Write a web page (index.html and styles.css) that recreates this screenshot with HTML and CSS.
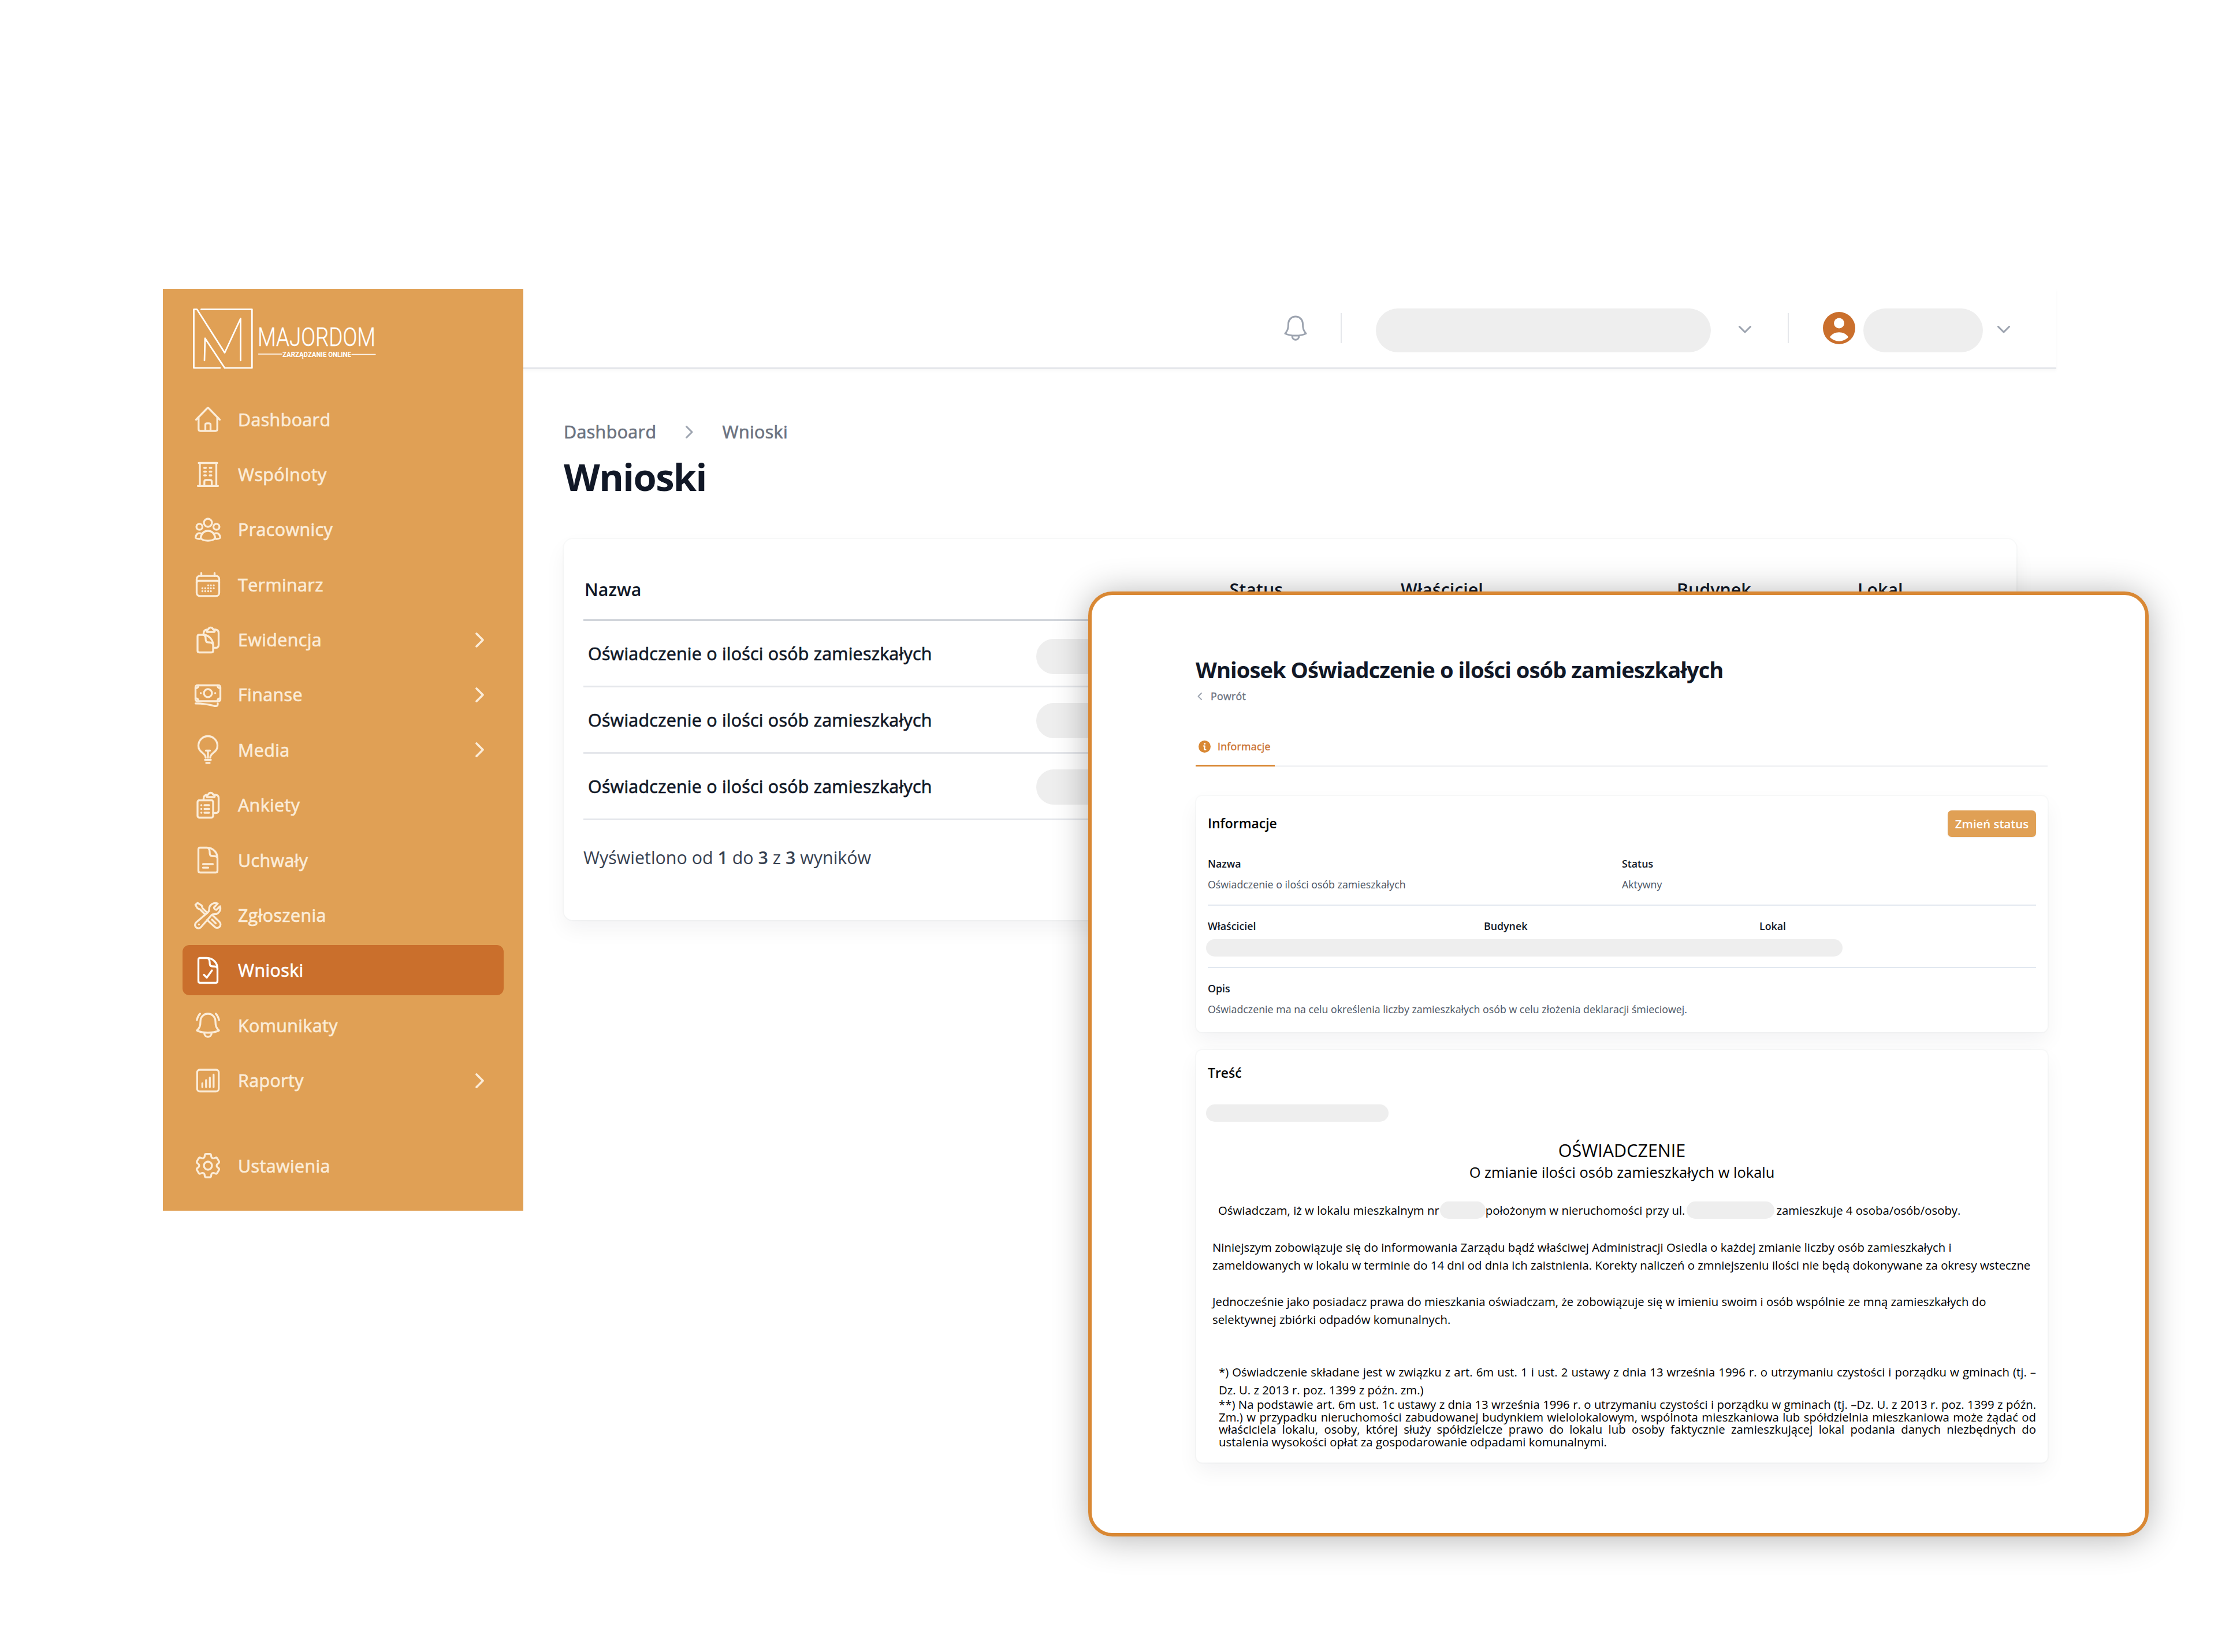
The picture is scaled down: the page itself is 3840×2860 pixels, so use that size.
FILE: index.html
```html
<!DOCTYPE html>
<html lang="pl">
<head>
  <meta charset="UTF-8">
  <title>Majordom - Wnioski</title>
  <link rel="stylesheet" href="styles.css">
</head>
<body>
  <div class="page">
    <div class="app">
      <aside class="sidebar">
        <svg class="logo" viewBox="0 0 318 106" fill="none" stroke="#fff" stroke-width="2.7" stroke-linejoin="round">
          <path d="M47 103H1.5V1.500H7L55 76.700L82.500 17.500V90"/>
          <path d="M14.300 1.500H102.300V103H55L21 51.700L20 90"/>
          <path d="M113.500 79H154M275 79.300H316" stroke-width="1.300"/>
          <text class="logo-name" x="112" y="65" textLength="204" lengthAdjust="spacingAndGlyphs">MAJORDOM</text>
          <text class="logo-sub" x="155" y="83.600" textLength="119" lengthAdjust="spacingAndGlyphs">ZARZĄDZANIE ONLINE</text>
        </svg>

        <nav class="menu">
          <a class="menu-item">
            <svg class="icon" viewBox="0 0 48 48"><path d="M3.500 24.500L22.500 5q1.500-1.500 3 0L44.500 24.500M7.800 21V41q0 3 3 3H37.200q3 0 3-3V21M19.500 44V33.500q0-2.700 2.700-2.700h3.600q2.700 0 2.700 2.700V44"/></svg>
            Dashboard
          </a>
          <a class="menu-item">
            <svg class="icon" viewBox="0 0 48 48"><path d="M8 4.500H40M10 4.500V44M38.500 4.500V44M6.500 44.300H41.500M17.800 44V37q0-3 3-3h6.800q3 0 3 3v7M17.500 13h3M27 13h3M17.500 19.500h3M27 19.500h3M17.500 26h3M27 26h3"/></svg>
            Wspólnoty
          </a>
          <a class="menu-item">
            <svg class="icon" viewBox="0 0 48 48"><circle cx="24" cy="12" r="7"/><circle cx="9.300" cy="19" r="5.200"/><circle cx="38.700" cy="19" r="5.200"/><path d="M11.500 39C12 31 17 26 24 26s12 5 12.500 13c-5 5.500-20 5.500-25 0zM13.500 31c-7-2.500-10.500 1-10.800 7 2 1.500 5 2.300 8 1.800M34.500 31c7-2.500 10.500 1 10.800 7-2 1.500-5 2.300-8 1.800"/></svg>
            Pracownicy
          </a>
          <a class="menu-item">
            <svg class="icon" viewBox="0 0 48 48"><rect x="4.500" y="9" width="39" height="35" rx="5.500"/><path d="M12.500 4v5M35.500 4v5M4.500 21q0-3.500 4-3.500H39.500q4 0 4 3.500"/><path d="M24.400 25.500h.1M29 25.500h.1M34 25.500h.1M14.300 30.500h.1M19.300 30.500h.1M24.400 30.500h.1M29 30.500h.1M34 30.500h.1M14.300 35.500h.1M19.300 35.500h.1M24.400 35.500h.1M29 35.500h.1"/></svg>
            Terminarz
          </a>
          <a class="menu-item">
            <svg class="icon" viewBox="0 0 48 48"><path d="M8.500 15H16C25 15 33 23.500 33 32.500V42.500q0 3-3 3H9q-3 0-3-3V18q0-3 2.500-3zM16 15c3 1 4 3.500 4 6.500q0 6.500 4 6.500c4.500 0 7 .5 8.500 3M16.500 15v-2.500c0-4 2-6.200 6-6.700M35 5.800h2q5.500.5 5.500 6V32.500q0 5-5 5H33M22.800 10H34.700c2 0 1.300-4-1.500-4-.8-2.600-2.300-3.700-4.500-3.700s-3.600 1.100-4.400 3.700c-2.800 0-3.500 4-1.500 4z"/></svg>
            Ewidencja
            <svg class="arrow" viewBox="0 0 15 26"><path d="M2 2L13 13L2 24"/></svg>
          </a>
          <a class="menu-item">
            <svg class="icon" viewBox="0 0 48 48"><rect x="2.500" y="7.500" width="43" height="27.500" rx="3"/><circle cx="24" cy="21" r="7"/><path d="M11.500 21h.2M36.500 21h.2M2.500 12.500q5 0 5-5M45.500 12.500q-5 0-5-5M2.500 30q5 0 5 5M45.500 30q-5 0-5 5M2.500 38.800C15 38.800 24 40 36 43.300q5.500 1 5-4.300"/></svg>
            Finanse
            <svg class="arrow" viewBox="0 0 15 26"><path d="M2 2L13 13L2 24"/></svg>
          </a>
          <a class="menu-item">
            <svg class="icon" viewBox="0 0 48 48"><path d="M20 37.500C20 29 7.500 29 7.500 17a16.500 16.500 0 0 1 33 0C40.500 29 28 29 28 37.500M20.500 25.500h7M24 25.500V37.500M19 41.500H29M21 46.800h6"/></svg>
            Media
            <svg class="arrow" viewBox="0 0 15 26"><path d="M2 2L13 13L2 24"/></svg>
          </a>
          <a class="menu-item">
            <svg class="icon" viewBox="0 0 48 48"><rect x="6" y="15.500" width="27" height="30" rx="3"/><path d="M12.500 24h.2M18 24h8M12.500 30.500h.2M18 30.500h8M12.500 37h.2M18 37h8M16.500 15v-2.500c0-4 2-6.200 6-6.700M35 5.800h2q5.500.5 5.500 6V32.500q0 5-5 5H33M22.800 10H34.700c2 0 1.300-4-1.500-4-.8-2.600-2.300-3.700-4.500-3.700s-3.600 1.100-4.400 3.700c-2.800 0-3.500 4-1.500 4z"/></svg>
            Ankiety
          </a>
          <a class="menu-item">
            <svg class="icon" viewBox="0 0 48 48"><path d="M10 2.500H22C33 2.500 40.500 11 40.500 21V42.500q0 3-3 3H10.500q-3 0-3-3V5.500q0-3 2.500-3zM22 2.500c4 1 5 3.500 5 7 0 5 .5 7.500 5 7.500 4 0 7 0 8.500 3.500M15.500 31H32.500M15.500 37.200h9"/></svg>
            Uchwały
          </a>
          <a class="menu-item">
            <svg class="icon" viewBox="0 0 48 48"><path d="M41 3.200C34 .8 26 5 26.200 13c0 2.500-.5 4-2.200 5.500L4 35.500c-7 6.500 3 14.500 8 8.500L30 23.500c1.500-1.600 3-2 5.500-1.800C43 22 47 14 45 8l-6.500 6.200c-2 0-4.200-2-4-4.200zM19 22L10.500 13.500 6 11.500 2.300 5.500 6 2.200l7.200 4.500 1.500 4.600L22.500 19M32 23.500L44 35c5.500 6.500-3 14-8.500 8.500L22.500 31.500M31 31l6.500 6.500M8.300 39.500h.1"/></svg>
            Zgłoszenia
          </a>
          <a class="menu-item active">
            <svg class="icon" viewBox="0 0 48 48"><path d="M10 2.500H22C33 2.500 40.500 11 40.500 21V42.500q0 3-3 3H10.500q-3 0-3-3V5.500q0-3 2.500-3zM22 2.500c4 1 5 3.500 5 7 0 5 .5 7.500 5 7.500 4 0 7 0 8.500 3.500M17 31.500l5 5L31 24"/></svg>
            Wnioski
          </a>
          <a class="menu-item">
            <svg class="icon" viewBox="0 0 48 48"><path d="M24 4c7.500 0 13 6 13 13.500C37 25 38.500 28.500 43 33c-9 5-29 5-38 0 4.500-4.500 6-8 6-15.500C11 10 16.500 4 24 4zM17.500 36.500c0 10 13 10 13 0M10.300 4Q6.500 8 4.800 15M37.700 4q3.800 4 5.500 11"/></svg>
            Komunikaty
          </a>
          <a class="menu-item">
            <svg class="icon" viewBox="0 0 48 48"><rect x="5.300" y="5" width="37.400" height="37.500" rx="4.500"/><path d="M14.300 28.500V35M20.800 23V35M27.300 18.500V35M33.800 13.500V35"/></svg>
            Raporty
            <svg class="arrow" viewBox="0 0 15 26"><path d="M2 2L13 13L2 24"/></svg>
          </a>
          <a class="menu-item settings">
            <svg class="icon" viewBox="0 0 48 48"><path transform="translate(-3 -3) scale(2.250)" stroke-width="1.450" d="M9.594 3.940c.09-.542.56-.94 1.110-.94h2.593c.55 0 1.020.398 1.110.94l.213 1.281c.063.374.313.686.645.87.074.04.147.083.22.127.325.196.72.257 1.075.124l1.217-.456a1.125 1.125 0 0 1 1.370.49l1.296 2.247a1.125 1.125 0 0 1-.26 1.431l-1.003.827c-.293.241-.438.613-.43.992a7.723 7.723 0 0 1 0 .255c-.008.378.137.75.43.991l1.004.827c.424.35.534.955.26 1.430l-1.298 2.247a1.125 1.125 0 0 1-1.369.491l-1.217-.456c-.355-.133-.75-.072-1.076.124a6.470 6.470 0 0 1-.22.128c-.331.183-.581.495-.644.869l-.213 1.281c-.09.543-.56.94-1.110.94h-2.594c-.55 0-1.019-.398-1.110-.94l-.213-1.281c-.062-.374-.312-.686-.644-.87a6.520 6.520 0 0 1-.22-.127c-.325-.196-.72-.257-1.076-.124l-1.217.456a1.125 1.125 0 0 1-1.369-.49l-1.297-2.247a1.125 1.125 0 0 1 .26-1.431l1.004-.827c.292-.24.437-.613.43-.991a6.932 6.932 0 0 1 0-.255c.007-.38-.138-.751-.43-.992l-1.004-.827a1.125 1.125 0 0 1-.26-1.430l1.297-2.247a1.125 1.125 0 0 1 1.370-.491l1.216.456c.356.133.751.072 1.076-.124.072-.044.146-.086.22-.128.332-.183.582-.495.644-.869l.214-1.280Z"/><circle cx="24" cy="24" r="7"/></svg>
            Ustawienia
          </a>
        </nav>
      </aside>

      <div class="main">
        <header class="topbar">
          <svg class="bell" viewBox="0 0 40 44"><path d="M20 2c7.500 0 12.500 6 12.500 13C32.500 23 34 26.500 38 31.500c-9 4.700-27 4.700-36 0 4-5 5.500-8.500 5.500-16.500C7.500 8 12.500 2 20 2zM14 35c0 9.500 12 9.500 12 0"/></svg>
          <span class="divider"></span>
          <span class="pill pill-company"></span>
          <svg class="chevron" viewBox="0 0 22 13"><path d="M1.500 1.500L11 11L20.500 1.500"/></svg>
          <span class="divider second"></span>
          <svg class="avatar" viewBox="0 0 56 56"><circle cx="28" cy="28" r="28" fill="#ca6f2c"/><circle cx="28" cy="19.500" r="9" fill="#fff"/><path d="M12 43.500C19 32.500 37 32.500 44 43.500C36 53 20 53 12 43.500z" fill="#fff"/></svg>
          <span class="pill pill-user"></span>
          <svg class="chevron last" viewBox="0 0 22 13"><path d="M1.500 1.500L11 11L20.500 1.500"/></svg>
        </header>

        <div class="content">
          <div class="breadcrumb">
            <span>Dashboard</span>
            <svg viewBox="0 0 13 22"><path d="M1.500 1.500L11 11L1.500 20.500"/></svg>
            <span>Wnioski</span>
          </div>
          <h1>Wnioski</h1>

          <div class="card list-card">
            <div class="row head">
              <span>Nazwa</span><span></span><span>Status</span><span>Właściciel</span><span>Budynek</span><span>Lokal</span>
            </div>
            <div class="row first">
              <span class="name">Oświadczenie o ilości osób zamieszkałych</span><span class="pill"></span>
            </div>
            <div class="row">
              <span class="name">Oświadczenie o ilości osób zamieszkałych</span><span class="pill"></span>
            </div>
            <div class="row">
              <span class="name">Oświadczenie o ilości osób zamieszkałych</span><span class="pill"></span>
            </div>
            <p class="summary">Wyświetlono od <b>1</b> do <b>3</b> z <b>3</b> wyników</p>
          </div>
        </div>
      </div>
    </div>

    <div class="modal">
      <h2>Wniosek Oświadczenie o ilości osób zamieszkałych</h2>
      <a class="back">
        <svg viewBox="0 0 8 13"><path d="M7 1L1.500 6.500L7 12"/></svg>
        Powrót
      </a>

      <div class="tabs">
        <a class="tab">
          <svg viewBox="0 0 21 21"><circle cx="10.500" cy="10.500" r="10.500" fill="#d98834"/><circle cx="10.700" cy="5.400" r="1.500" fill="#fff"/><path d="M8.800 9.500h2l-.6 5.200q0 1.200 1.200 1.200h1" fill="none" stroke="#fff" stroke-width="2.200"/></svg>
          Informacje
        </a>
      </div>

      <div class="card info-card">
        <div class="card-head">
          <h3>Informacje</h3>
          <button class="btn-primary">Zmień status</button>
        </div>
        <div class="fields two">
          <div><label>Nazwa</label><p>Oświadczenie o ilości osób zamieszkałych</p></div>
          <div><label>Status</label><p>Aktywny</p></div>
        </div>
        <div class="fields three">
          <label>Właściciel</label>
          <label>Budynek</label>
          <label>Lokal</label>
          <span class="pill pill-owner"></span>
        </div>
        <div class="fields">
          <div><label>Opis</label><p>Oświadczenie ma na celu określenia liczby zamieszkałych osób w celu złożenia deklaracji śmieciowej.</p></div>
        </div>
      </div>

      <div class="card text-card">
        <h3>Treść</h3>
        <span class="pill pill-address"></span>
        <div class="doc-title">OŚWIADCZENIE</div>
        <div class="doc-subtitle">O zmianie ilości osób zamieszkałych w lokalu</div>
        <p class="statement">
          <span>Oświadczam, iż w lokalu mieszkalnym nr</span>
          <span class="pill pill-flat"></span>
          <span>położonym w nieruchomości przy ul.</span>
          <span class="pill pill-street"></span>
          <span>zamieszkuje 4 osoba/osób/osoby.</span>
        </p>
        <p class="para">Niniejszym zobowiązuje się do informowania Zarządu bądź właściwej Administracji Osiedla o każdej zmianie liczby osób zamieszkałych i<br>zameldowanych w lokalu w terminie do 14 dni od dnia ich zaistnienia. Korekty naliczeń o zmniejszeniu ilości nie będą dokonywane za okresy wsteczne</p>
        <p class="para">Jednocześnie jako posiadacz prawa do mieszkania oświadczam, że zobowiązuje się w imieniu swoim i osób wspólnie ze mną zamieszkałych do<br>selektywnej zbiórki odpadów komunalnych.</p>
        <p class="note">*) Oświadczenie składane jest w związku z art. 6m ust. 1 i ust. 2 ustawy z dnia 13 września 1996 r. o utrzymaniu czystości i porządku w gminach (tj. – Dz. U. z 2013 r. poz. 1399 z późn. zm.)</p>
        <p class="note tight">**) Na podstawie art. 6m ust. 1c ustawy z dnia 13 września 1996 r. o utrzymaniu czystości i porządku w gminach (tj. –Dz. U. z 2013 r. poz. 1399 z późn. Zm.) w przypadku nieruchomości zabudowanej budynkiem wielolokalowym, wspólnota mieszkaniowa lub spółdzielnia mieszkaniowa może żądać od właściciela lokalu, osoby, której służy spółdzielcze prawo do lokalu lub osoby faktycznie zamieszkującej lokal podania danych niezbędnych do ustalenia wysokości opłat za gospodarowanie odpadami komunalnymi.</p>
      </div>
    </div>
  </div>
</body>
</html>
```

FILE: styles.css
```css
:root {
  --primary: #e0a055;
  --primary-dark: #ca6f2c;
  --accent: #d98834;
  --cream: #fbecd8;
  --dark: #111827;
  --muted: #6b7280;
  --gray: #9ca3af;
  --border: #e2e8f0;
  --pill: #eeeeee;
}

* {
  box-sizing: border-box;
}

body {
  margin: 0;
  font-family: "Open Sans", "Noto Sans", sans-serif;
  background: #fff;
  color: var(--dark);
}

h1, h2, h3, p {
  margin: 0;
}

.page {
  position: relative;
  width: 3840px;
  height: 2860px;
  padding: 500px 280px 0 282px;
  overflow: hidden;
}

.app {
  display: flex;
  height: 1596px;
}

svg path,
svg circle,
svg rect {
  stroke-linecap: round;
  stroke-linejoin: round;
}

/* sidebar */
.sidebar {
  width: 624px;
  padding: 34px 34px 0;
  background: var(--primary);
}

.logo {
  display: block;
  width: 318px;
  height: 106px;
  margin-left: 18px;
  overflow: visible;
}

.logo text {
  fill: #fff;
  stroke: none;
}

.logo .logo-name {
  font-family: Roboto, sans-serif;
  font-weight: 300;
  font-size: 45px;
  stroke: #fff;
  stroke-width: 0.4px;
}

.logo-sub {
  font-family: Roboto, sans-serif;
  font-weight: 700;
  font-size: 13.5px;
}

.menu {
  display: flex;
  flex-direction: column;
  gap: 8.400px;
  margin-top: 42px;
}

/* medium weight: regular cut, slightly thickened */
.menu-item,
.breadcrumb,
.row .name {
  font-size: 30.400px;
  font-weight: 400;
  -webkit-text-stroke: 0.700px currentColor;
}

.menu-item {
  display: flex;
  align-items: center;
  gap: 28px;
  height: 87px;
  padding: 1px 34px 0 20px;
  border-radius: 12px;
  letter-spacing: 0.400px;
  color: var(--cream);
}

.menu-item.active {
  background: var(--primary-dark);
  color: #fff;
}

.menu-item.settings {
  margin-top: 52px;
}

.icon {
  width: 48px;
  height: 48px;
  fill: none;
  stroke: currentColor;
  stroke-width: 3.300;
  overflow: visible;
}

.arrow {
  width: 15px;
  height: 26px;
  margin-left: auto;
  fill: none;
  stroke: currentColor;
  stroke-width: 3.800;
  overflow: visible;
}

/* top bar */
.main {
  flex: 1;
}

.topbar {
  display: flex;
  align-items: center;
  justify-content: flex-end;
  height: 139px;
  padding-right: 80px;
  border-bottom: 3px solid #e5e7eb;
  box-shadow: 0 3px 5px rgba(0, 0, 0, 0.03);
}

.pill {
  display: block;
  background: var(--pill);
  border-radius: 38px;
}

.bell {
  width: 40px;
  height: 44px;
  fill: none;
  stroke: var(--gray);
  stroke-width: 3;
}

.divider {
  width: 2px;
  height: 52px;
  margin: 0 59px 0 58px;
  background: #e5e7eb;
}

.divider.second {
  margin-left: 63px;
}

.pill-company {
  width: 580px;
  height: 76px;
  margin: 8px 48px 0 0;
}

.pill-user {
  width: 207px;
  height: 76px;
  margin: 8px 25px 0 14px;
}

.chevron {
  width: 22px;
  height: 13px;
  margin-top: 4px;
  fill: none;
  stroke: var(--gray);
  stroke-width: 3;
}

.avatar {
  width: 56px;
  height: 56px;
}

/* list */
.content {
  padding: 87px 69px 0 70px;
}

.breadcrumb {
  display: flex;
  align-items: center;
  line-height: 44px;
  letter-spacing: 0.400px;
  color: var(--muted);
}

.breadcrumb svg {
  width: 13px;
  height: 22px;
  margin: 0 50px 0 51px;
  fill: none;
  stroke: var(--gray);
  stroke-width: 3;
}

h1 {
  margin-top: 19px;
  font-size: 65px;
  font-weight: 700;
  line-height: 72px;
  letter-spacing: -0.025em;
}

.card {
  background: #fff;
  border-radius: 16px;
  box-shadow: 0 0 0 2px rgba(17, 24, 39, 0.025), 0 16px 36px rgba(17, 24, 39, 0.05);
}

.list-card {
  height: 660px;
  margin-top: 72px;
  padding: 35px 34px 0;
}

.row {
  display: grid;
  grid-template-columns: 783px 333.500px 296.500px 478px 313px 1fr;
  align-items: center;
  height: 115px;
  border-bottom: 3px solid #e5e7eb;
}

.row.head {
  height: 107px;
  padding-left: 2px;
  border-bottom-color: #d1d5db;
  font-size: 30.400px;
  font-weight: 600;
}

.row .name {
  padding-left: 8px;
  letter-spacing: 0.250px;
}

.row .pill {
  width: 240px;
  height: 61px;
  margin: 2px 0 0 1px;
}

.row.first .pill {
  margin-top: 10px;
}

.summary {
  margin-top: 43px;
  font-size: 30.400px;
  line-height: 44px;
  color: #374151;
}

.summary b {
  font-weight: 600;
}

/* modal */
.modal {
  position: absolute;
  left: 1884px;
  top: 1024px;
  width: 1836px;
  height: 1636px;
  padding: 104px 169px 0 180px;
  background: #fff;
  border: 6px solid var(--accent);
  border-radius: 42px;
  box-shadow: 0 4px 60px rgba(0, 0, 0, 0.3);
}

h2 {
  font-size: 38.150px;
  font-weight: 700;
  line-height: 50px;
  letter-spacing: -0.025em;
  white-space: nowrap;
}

.back,
.tab {
  display: flex;
  align-items: center;
  font-size: 17.800px;
  letter-spacing: 0.250px;
  -webkit-text-stroke: 0.400px currentColor;
}

.back {
  gap: 15px;
  margin-top: 8px;
  padding-left: 3px;
  line-height: 26px;
  color: var(--muted);
}

.back svg {
  width: 8px;
  height: 13px;
  fill: none;
  stroke: var(--gray);
  stroke-width: 1.800;
}

.tabs {
  height: 67px;
  margin-top: 42px;
  box-shadow: inset 0 -1.500px #e5e7eb;
}

.tab {
  gap: 12px;
  width: 137px;
  height: 67px;
  padding-left: 5px;
  border-bottom: 3px solid var(--accent);
  color: var(--primary-dark);
}

.tab svg {
  width: 21px;
  height: 21px;
}

.modal .card {
  margin-left: 1px;
  padding: 0 20px;
  border-radius: 10px;
}

.modal .info-card {
  height: 409px;
  margin-top: 51px;
  padding-top: 25px;
}

.card-head {
  display: flex;
  align-items: center;
  justify-content: space-between;
  height: 46px;
}

h3 {
  font-size: 22.900px;
  font-weight: 600;
  line-height: 32px;
  color: #000;
}

.btn-primary {
  width: 153px;
  height: 46px;
  padding: 0;
  border: none;
  border-radius: 7px;
  background: var(--primary);
  color: #fff;
  font-family: inherit;
  font-size: 20.350px;
  font-weight: 600;
  box-shadow: 0 1px 2px rgba(0, 0, 0, 0.08);
}

.fields {
  padding: 22px 0;
  font-size: 17.800px;
  line-height: 26px;
}

.fields + .fields {
  border-top: 2px solid var(--border);
}

.fields.two {
  display: grid;
  grid-template-columns: 1fr 1fr;
  margin-top: 11px;
}

.fields.three {
  display: grid;
  grid-template-columns: 478px 477px 1fr;
  padding-bottom: 18px;
}

.fields label {
  display: block;
  font-weight: 600;
}

.fields p {
  margin-top: 10px;
  color: #4b5563;
  white-space: nowrap;
}

.pill-owner {
  grid-column: 1 / 4;
  width: 1102px;
  height: 30px;
  margin: 10px 0 0 -3px;
}

.modal .text-card {
  height: 714px;
  margin-top: 31px;
  padding-top: 24px;
  color: #000;
}

.pill-address {
  width: 316px;
  height: 30px;
  margin: 38px 0 0 -3px;
}

.doc-title {
  margin-top: 28.500px;
  font-size: 30.500px;
  line-height: 40px;
  text-align: center;
}

.doc-subtitle {
  font-size: 25.450px;
  line-height: 36px;
  text-align: center;
}

.statement,
.para,
.note {
  font-size: 20.350px;
  line-height: 31px;
}

.statement {
  display: flex;
  margin: 33.500px 0 0 18px;
  line-height: 30px;
  white-space: nowrap;
}

.pill-flat {
  width: 79px;
  height: 30px;
  margin-left: 1px;
}

.pill-street {
  width: 152px;
  height: 30px;
  margin: 0 3px;
}

.para {
  margin: 32px 0 0 8px;
  white-space: nowrap;
}

.statement + .para {
  margin-top: 34px;
}

.note {
  margin: 60px 0 0 19px;
  width: 1415px;
  text-align: justify;
}

.note.tight {
  margin-top: -1px;
  line-height: 21.500px;
}
```
